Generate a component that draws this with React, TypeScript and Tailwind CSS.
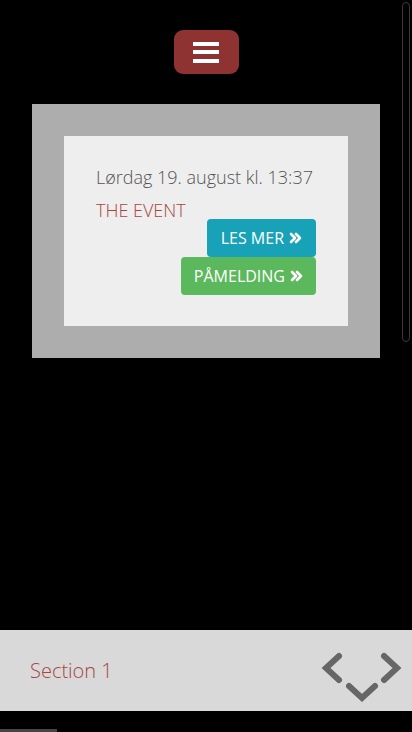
import React from "react";

export default function App() {
  return (
    <div
      className="relative h-[732px] w-[412px] overflow-hidden bg-black"
      style={{ fontFamily: '"Open Sans", "Liberation Sans", sans-serif' }}
    >
      <div className="flex justify-center pt-[30px]">
        <button className="flex h-[44px] w-[65px] flex-col items-center justify-center gap-[4.5px] rounded-[9px] bg-[#8e3232]">
          <span className="block h-[4px] w-[26px] bg-white" />
          <span className="block h-[4px] w-[26px] bg-white" />
          <span className="block h-[4px] w-[26px] bg-white" />
        </button>
      </div>

      <div className="mx-[32px] mt-[30px] bg-[#adadad] p-[32px]">
        <div className="h-[190px] bg-[#eeeeee] px-[32px] pt-[28px]">
          <div className="text-[18px] font-light leading-[27px] text-[#555555]">
            Lørdag 19. august kl. 13:37
          </div>
          <div className="mt-[8px] text-[18px] font-light leading-[22px] text-[#a94442]">
            THE EVENT
          </div>
          <div className="-mt-[2px] flex flex-col items-end">
            <button className="flex h-[38px] items-center gap-[5px] rounded-[4px] bg-[#17a2b8] px-[14px] text-[16px] text-white">
              LES MER
              <Chev />
            </button>
            <button className="flex h-[38px] items-center gap-[5px] rounded-[4px] bg-[#5cb85c] px-[13px] text-[16px] text-white">
              PÅMELDING
              <Chev />
            </button>
          </div>
        </div>
      </div>

      <div className="mt-[272px] flex h-[81px] justify-between bg-[#d9d9d9] pl-[30px]">
        <span className="self-center text-[20px] font-light text-[#a94442]">Section 1</span>
        <svg width="94" height="64" viewBox="0 0 94 64" className="mt-[18px] self-start">
          <g fill="none" stroke="#666666" strokeWidth="6" strokeLinecap="round" strokeLinejoin="miter">
            <polyline points="21,8 8,20 21,32" />
            <polyline points="66,8 79,20 66,32" />
            <polyline points="31,38 44,50 57,38" />
          </g>
        </svg>
      </div>

      <div className="absolute bottom-0 left-0 h-[3px] w-[57px] bg-[#444444]" />
      <div className="absolute right-[2px] top-[2px] h-[340px] w-[8px] rounded-full border border-[#3a3a3a]" />
    </div>
  );
}

function Chev() {
  return (
    <svg width="13" height="12" viewBox="0 0 13 12">
      <g fill="none" stroke="white" strokeWidth="2.6" strokeLinecap="round" strokeLinejoin="round">
        <polyline points="2,2 6,6 2,10" />
        <polyline points="7,2 11,6 7,10" />
      </g>
    </svg>
  );
}
